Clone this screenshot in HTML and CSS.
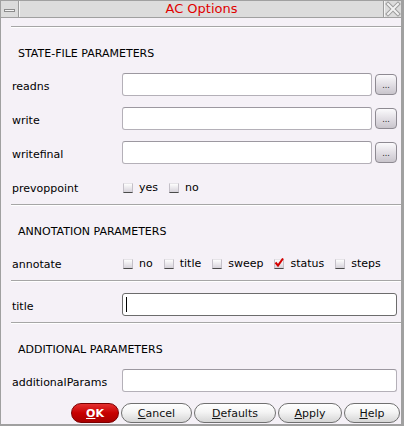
FILE: index.html
```html
<!DOCTYPE html>
<html>
<head>
<meta charset="utf-8">
<link rel="stylesheet" href="styles.css">
</head>
<body>
<div class="window">
  <div class="titlebar">
    <div class="tb-min"><span class="min-bar"></span></div>
    <div class="tb-title">AC Options</div>
    <div class="tb-close">
      <svg width="16" height="16" viewBox="0 0 16 16">
        <path d="M3 3 L13 13 M13 3 L3 13" stroke="#9c9c9c" stroke-width="4" stroke-linecap="square"/>
        <path d="M3 3 L13 13 M13 3 L3 13" stroke="#f2f2f2" stroke-width="2" stroke-linecap="square"/>
      </svg>
    </div>
  </div>
  <div class="content">
    <div class="sep first"></div>
    <div class="heading">STATE-FILE PARAMETERS</div>
    <div class="row first">
      <span class="lbl">readns</span>
      <div class="field"></div>
      <div class="browse">...</div>
    </div>
    <div class="row">
      <span class="lbl">write</span>
      <div class="field"></div>
      <div class="browse">...</div>
    </div>
    <div class="row">
      <span class="lbl">writefinal</span>
      <div class="field"></div>
      <div class="browse">...</div>
    </div>
    <div class="row">
      <span class="lbl">prevoppoint</span>
      <div class="checks">
        <span class="opt"><span class="box"></span>yes</span>
        <span class="opt"><span class="box"></span>no</span>
      </div>
    </div>
    <div class="sep"></div>
    <div class="heading">ANNOTATION PARAMETERS</div>
    <div class="row first">
      <span class="lbl">annotate</span>
      <div class="checks">
        <span class="opt"><span class="box"></span>no</span>
        <span class="opt"><span class="box"></span>title</span>
        <span class="opt"><span class="box"></span>sweep</span>
        <span class="opt"><span class="box checked"><svg width="10" height="10" viewBox="0 0 10 10"><path d="M1.5 4.5 L4 7.5 L9 0.5" fill="none" stroke="#d40000" stroke-width="2"/></svg></span>status</span>
        <span class="opt"><span class="box"></span>steps</span>
      </div>
    </div>
    <div class="sep"></div>
    <div class="row tight">
      <span class="lbl">title</span>
      <div class="field focused"><span class="caret"></span></div>
    </div>
    <div class="sep"></div>
    <div class="heading">ADDITIONAL PARAMETERS</div>
    <div class="row first">
      <span class="lbl">additionalParams</span>
      <div class="field"></div>
    </div>
    <div class="buttons">
      <div class="btn ok"><u>O</u>K</div>
      <div class="btn cancel"><u>C</u>ancel</div>
      <div class="btn defaults"><u>D</u>efaults</div>
      <div class="btn apply"><u>A</u>pply</div>
      <div class="btn help"><u>H</u>elp</div>
    </div>
  </div>
</div>
</body>
</html>
```

FILE: styles.css
```css
html, body {
  margin: 0;
  padding: 0;
  background: #f5f1f7;
}

body {
  font-family: "DejaVu Sans", Verdana, sans-serif;
  font-size: 11px;
  color: #000;
}

.window {
  width: 404px;
  height: 426px;
  box-sizing: border-box;
  border-style: solid;
  border-color: #a0a0a0;
  border-width: 1px 3px 2px 1px;
  background: #f5f1f7;
  display: flex;
  flex-direction: column;
  overflow: hidden;
}

.titlebar {
  height: 16px;
  flex: none;
  display: flex;
  background: #dcdcdc;
  border-bottom: 1px solid #a0a0a0;
}

.tb-min {
  width: 17px;
  border-right: 1px solid #9c9c9c;
  display: flex;
  align-items: center;
  justify-content: center;
}

.min-bar {
  display: block;
  width: 9px;
  height: 1px;
  border: 1px solid #8c8c8c;
  background: #f4f4f4;
  margin-top: 3px;
}

.tb-title {
  flex: 1;
  border-left: 1px solid #f4f4f4;
  border-right: 1px solid #9c9c9c;
  text-align: center;
  color: #e00000;
  font-size: 13px;
  line-height: 16px;
}

.tb-close {
  width: 16px;
  border-left: 1px solid #f4f4f4;
  display: flex;
  align-items: center;
  justify-content: center;
}

.tb-close svg {
  display: block;
}

.content {
  flex: 1;
  display: flex;
  flex-direction: column;
  padding-left: 10px;
}

.sep {
  height: 0;
  margin-top: 6px;
  border-top: 1px solid #a6a6a6;
  border-bottom: 1px solid #ffffff;
}

.sep.first {
  margin-top: 8px;
}

.heading {
  margin-top: 19px;
  line-height: 13px;
  padding-left: 7px;
}

.row {
  display: flex;
  align-items: center;
  height: 23px;
  margin-top: 11px;
  padding-right: 4px;
}

.row.first {
  margin-top: 13px;
}

.lbl {
  width: 110px;
  margin-left: 1px;
  flex: none;
  line-height: 13px;
  padding-top: 3px;
}

.field {
  flex: 1;
  height: 23px;
  box-sizing: border-box;
  border: 1px solid #b4b0b8;
  border-top-color: #9c98a0;
  border-radius: 3px;
  background: #fff;
  display: flex;
  align-items: center;
}

.field.focused {
  border-color: #6c6c6c;
}

.caret {
  display: block;
  width: 1px;
  height: 15px;
  margin-left: 3px;
  background: #000;
}

.browse {
  width: 22px;
  height: 21px;
  margin-left: 3px;
  box-sizing: border-box;
  border: 1px solid #8e8a92;
  border-radius: 4px;
  background: linear-gradient(#fbfafc, #ddd9e0 60%, #c9c5cc);
  font-size: 8px;
  line-height: 8px;
  text-align: center;
  display: flex;
  align-items: flex-end;
  justify-content: center;
  padding-bottom: 4px;
  color: #222;
}

.checks {
  display: flex;
  align-items: center;
  padding-top: 2px;
}

.opt {
  display: flex;
  align-items: center;
  margin-right: 10px;
  line-height: 13px;
}

.box {
  width: 10px;
  height: 10px;
  box-sizing: border-box;
  margin-left: 1px;
  margin-right: 6px;
  margin-top: 1px;
  border: 1px solid;
  border-color: #e6e4e8 #c4c0c8 #4a4a4a #c4c0c8;
  background: linear-gradient(#fdfdfd, #d6d2da);
  position: relative;
}

.box.checked svg {
  position: absolute;
  left: -1px;
  top: -2px;
}

.buttons {
  margin-top: 11px;
  height: 20px;
  display: flex;
  justify-content: flex-end;
  gap: 2px;
  padding-right: 1px;
}

.btn {
  height: 20px;
  box-sizing: border-box;
  border: 1px solid #707070;
  border-radius: 10px;
  background: linear-gradient(#ffffff, #f4f4f4 45%, #d6d6d6);
  text-align: center;
  line-height: 19px;
  color: #111;
}

.btn u {
  text-decoration: underline;
  text-underline-offset: 1px;
}

.btn.ok {
  width: 48px;
  background: linear-gradient(#e43030, #c80000 50%, #a80000);
  border-color: #7a0000;
  color: #fff;
  font-weight: bold;
}

.btn.cancel { width: 71px; }
.btn.defaults { width: 82px; }
.btn.apply { width: 64px; }
.btn.help { width: 56px; }
```
